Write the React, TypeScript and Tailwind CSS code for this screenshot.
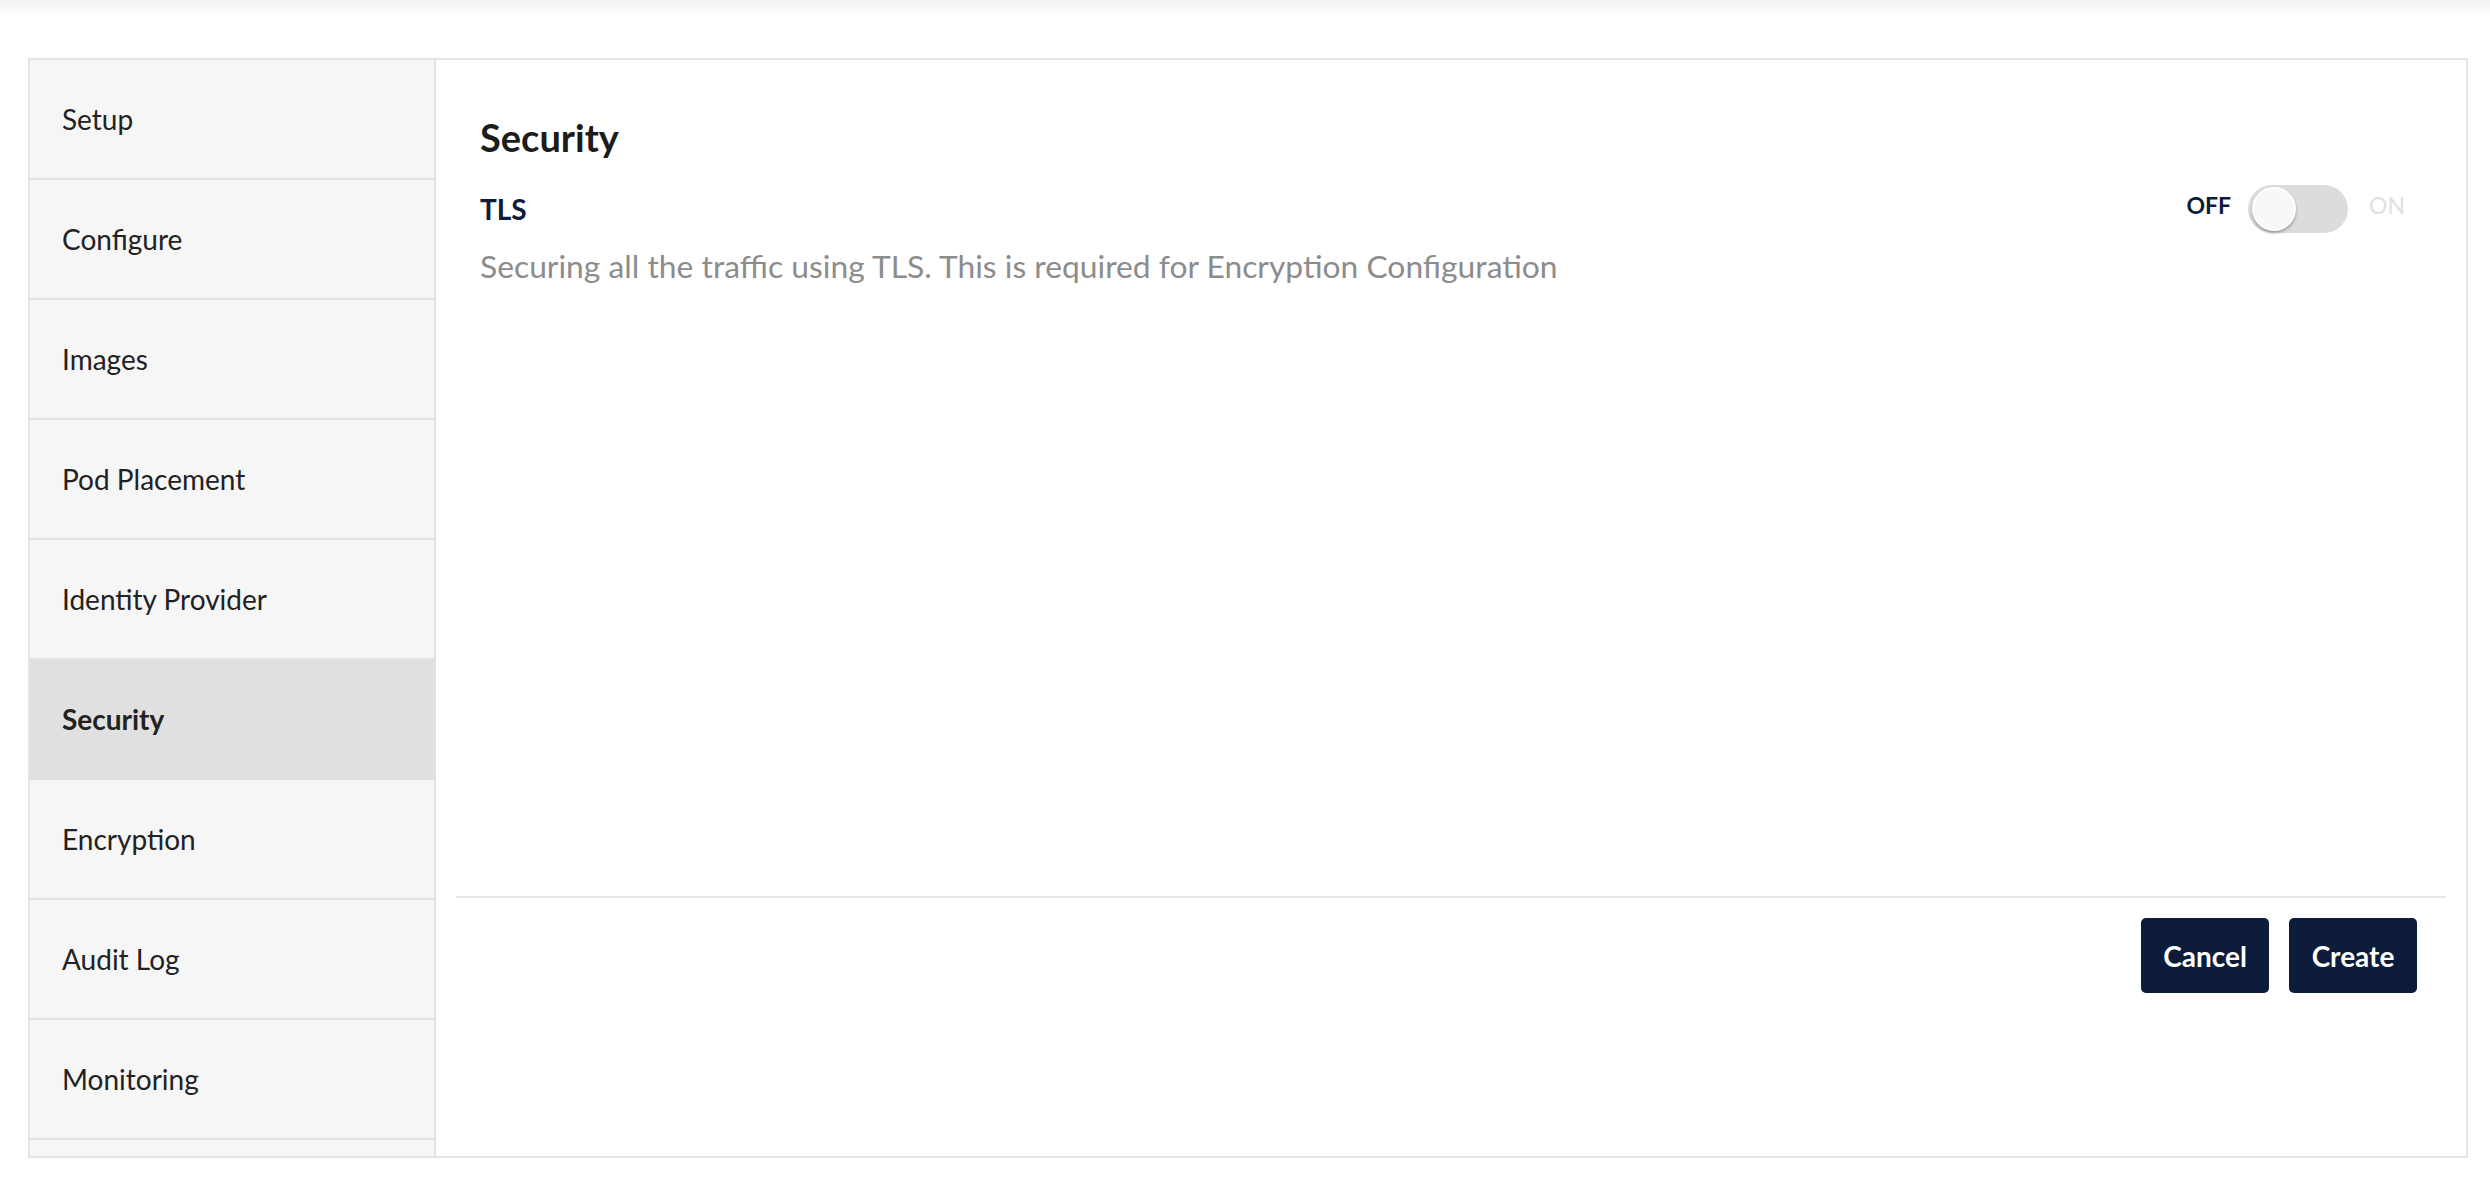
import React from "react";

const items = [
  "Setup",
  "Configure",
  "Images",
  "Pod Placement",
  "Identity Provider",
  "Security",
  "Encryption",
  "Audit Log",
  "Monitoring",
  "",
];

export default function App() {
  return (
    <div className="min-h-screen bg-white font-['Lato','Noto_Sans',sans-serif]">
      <div className="h-[16px] bg-gradient-to-b from-[#f2f2f2] to-white" />
      <div className="ml-[28px] mt-[42px] w-[2440px] h-[1100px] border-2 border-[#e4e4e4] flex overflow-hidden">
        <div className="w-[406px] shrink-0 bg-[#f6f6f6] border-r-2 border-[#e2e2e2] flex flex-col overflow-hidden">
          {items.map((it, i) => {
            const active = it === "Security";
            return (
              <div
                key={i}
                className={
                  active
                    ? "h-[120px] shrink-0 border-b-2 border-[#e0e0e0] bg-[#e0e0e0] flex items-center pl-[32px] text-[28px] font-bold text-[#222222]"
                    : "h-[120px] shrink-0 border-b-2 border-[#e2e2e2] flex items-center pl-[32px] text-[28px] text-[#222222]"
                }
              >
                {it}
              </div>
            );
          })}
        </div>
        <div className="flex-1 flex flex-col">
          <div className="h-[836px] shrink-0 pl-[44px] pr-[61px] pt-[58px]">
            <div className="text-[38px] leading-[38px] font-bold text-[#1c1c1c]">Security</div>
            <div className="mt-[29px] flex items-center justify-between">
              <div className="text-[28px] leading-[28px] font-bold text-[#0d1c3a]">TLS</div>
              <div className="flex items-center">
                <span className="mb-[8px] text-[23px] leading-[23px] font-bold text-[#0d1c3a]">OFF</span>
                <div className="ml-[17px] w-[100px] h-[48px] rounded-full bg-[#dcdcdc] relative">
                  <div className="absolute left-[4px] top-[2px] w-[44px] h-[44px] rounded-full bg-[#f8f8f8] border-2 border-white shadow-[0_2px_3px_rgba(0,0,0,0.3)]" />
                </div>
                <span className="mb-[8px] ml-[21px] text-[23px] leading-[23px] text-[#e0e0e0]">ON</span>
              </div>
            </div>
            <div className="mt-[17px] text-[31.8px] leading-[32px] text-[#8c8c8c]">
              Securing all the traffic using TLS. This is required for Encryption Configuration
            </div>
          </div>
          <div className="flex-1 flex flex-col">
            <div className="mx-[20px] h-[2px] bg-[#e6e6e6]" />
            <div className="mt-[20px] flex justify-end gap-[20px] pr-[49px]">
              <button className="w-[128px] h-[75px] rounded-[5px] bg-[#0d1c3a] text-white text-[28px] font-bold">
                Cancel
              </button>
              <button className="w-[128px] h-[75px] rounded-[5px] bg-[#0d1c3a] text-white text-[28px] font-bold">
                Create
              </button>
            </div>
          </div>
        </div>
      </div>
    </div>
  );
}
